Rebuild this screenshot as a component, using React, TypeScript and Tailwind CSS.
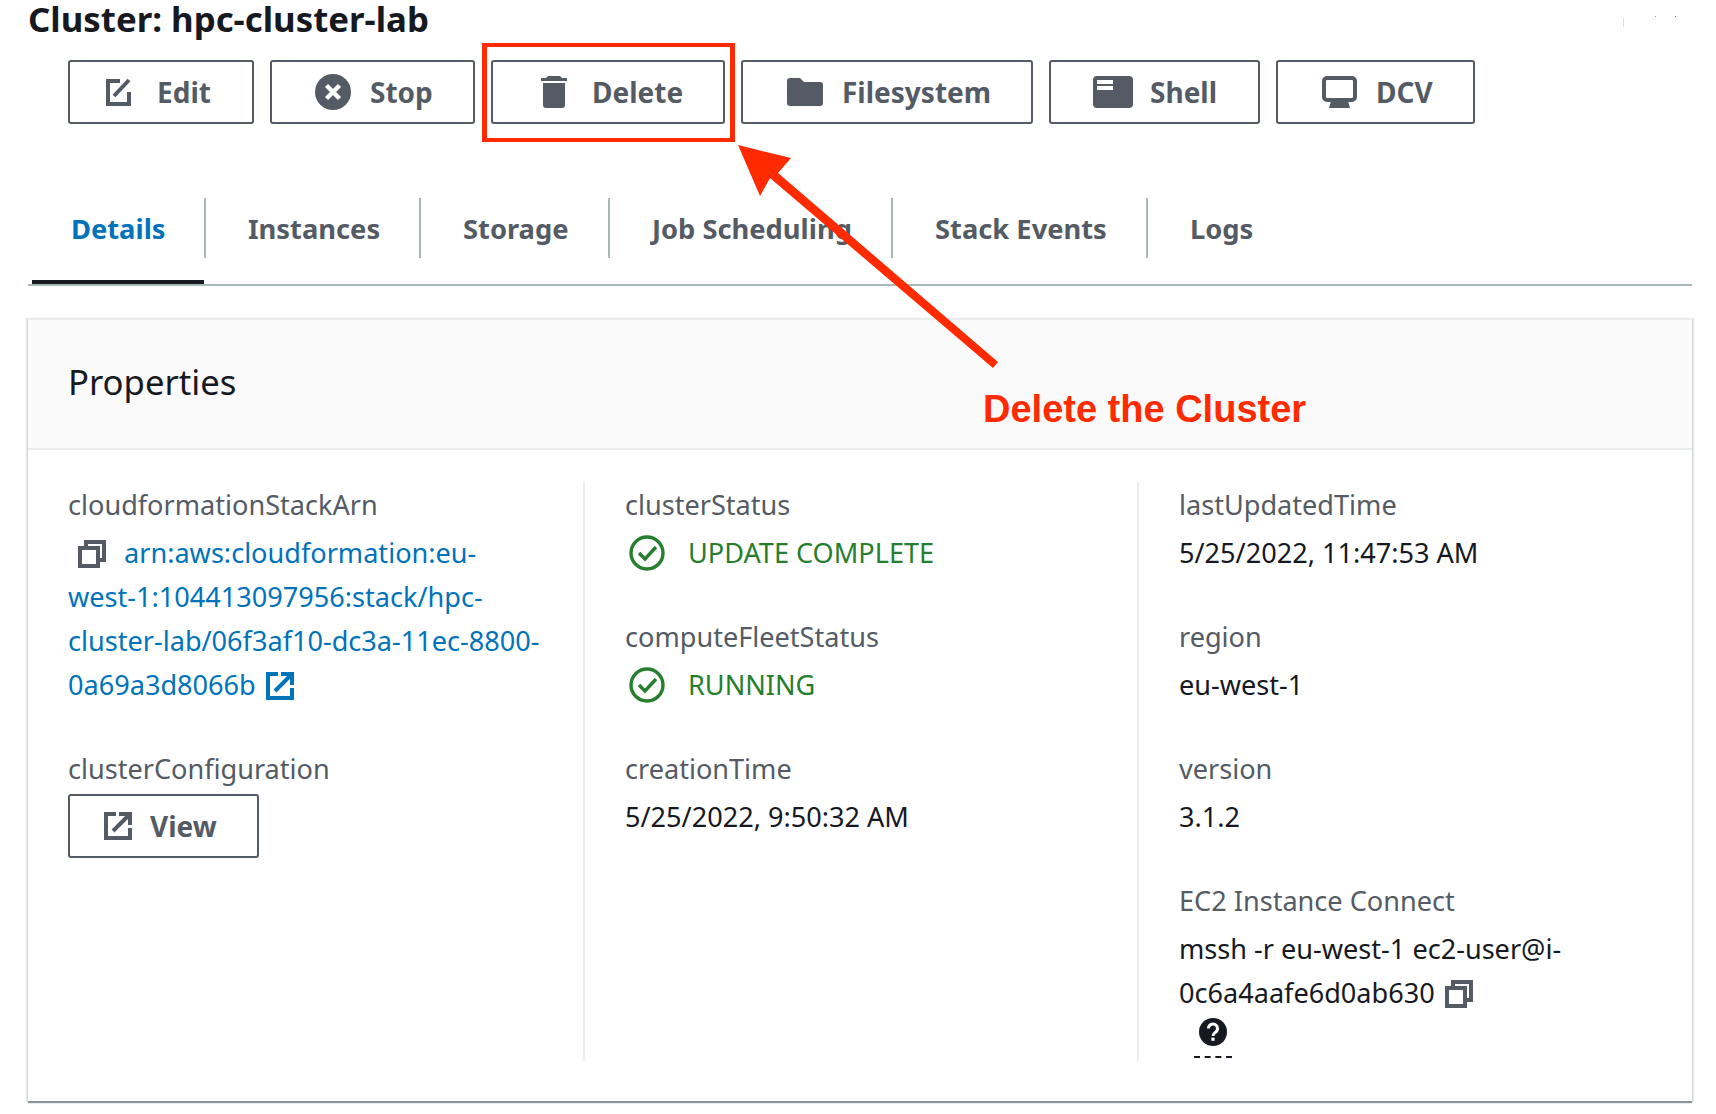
import React from 'react';

const noto = { fontFamily: '"Noto Sans", sans-serif' };

function EditIcon() {
  return (
    <svg viewBox="0 0 25 28" className="w-[25px] h-[28px]" fill="none" stroke="#545b64" strokeWidth="4">
      <path d="M14 3H2v23h21V14" />
      <path d="M8 18 23 2" />
    </svg>
  );
}

function StopIcon() {
  return (
    <svg viewBox="0 0 36 36" className="w-[36px] h-[36px]">
      <circle cx="18" cy="18" r="18" fill="#545b64" />
      <path d="M11.5 11.5l13 13M24.5 11.5l-13 13" stroke="#fff" strokeWidth="4.4" fill="none" />
    </svg>
  );
}

function TrashIcon() {
  return (
    <svg viewBox="0 0 26 32" className="w-[26px] h-[32px]" fill="#545b64">
      <path d="M7 0h12l2 2h5v3H0V2h5z" />
      <path d="M2 7h22v22a3 3 0 0 1-3 3H5a3 3 0 0 1-3-3z" />
    </svg>
  );
}

function FolderIcon() {
  return (
    <svg viewBox="0 0 36 28" className="w-[36px] h-[28px]" fill="#545b64">
      <path d="M3 0h10l4 4h16a3 3 0 0 1 3 3v18a3 3 0 0 1-3 3H3a3 3 0 0 1-3-3V3a3 3 0 0 1 3-3z" />
    </svg>
  );
}

function ShellIcon() {
  return (
    <svg viewBox="0 0 40 32" className="w-[40px] h-[32px]">
      <rect width="40" height="32" rx="4" fill="#545b64" />
      <rect x="4" y="4" width="16" height="4" fill="#fff" />
      <rect x="4" y="10" width="16" height="4" fill="#fff" />
    </svg>
  );
}

function MonitorIcon() {
  return (
    <svg viewBox="0 0 35 32" className="w-[35px] h-[32px]" fill="none">
      <rect x="2" y="2" width="31" height="22" rx="3" stroke="#545b64" strokeWidth="4" />
      <path d="M9 25h17l2 7H7z" fill="#545b64" />
    </svg>
  );
}

function CopyIcon() {
  return (
    <svg viewBox="0 0 28 28" className="w-[28px] h-[28px] shrink-0" fill="none" stroke="#545b64" strokeWidth="4">
      <rect x="2" y="8" width="18" height="18" />
      <path d="M8 7V2h18v18h-5" />
    </svg>
  );
}

function ExternalIcon({ color }: { color: string }) {
  return (
    <svg viewBox="0 0 28 28" className="w-[28px] h-[28px] shrink-0" fill="none" stroke={color} strokeWidth="4">
      <path d="M12 2H2v24h24V16" />
      <path d="M9 19 24 4M15 2h11v11" />
    </svg>
  );
}

function CheckIcon() {
  return (
    <svg viewBox="0 0 36 36" className="w-[36px] h-[36px] shrink-0" fill="none" stroke="#277e2f" strokeWidth="3.4">
      <circle cx="18" cy="18" r="16" />
      <path d="M10 18l6 6 11-12" />
    </svg>
  );
}

function HelpIcon() {
  return (
    <svg viewBox="0 0 28 28" className="w-[28px] h-[28px]">
      <circle cx="14" cy="14" r="14" fill="#16191f" />
      <path d="M9.5 10.5a4.5 4.5 0 1 1 7 3.7c-1.6 1.1-2.5 1.8-2.5 3.8" stroke="#fff" strokeWidth="3" fill="none" />
      <rect x="12.4" y="19.6" width="3.2" height="3.2" fill="#fff" />
    </svg>
  );
}

const buttons = [
  { label: 'Edit', icon: <EditIcon />, cls: 'w-[186px] pl-[36px] gap-[26px]' },
  { label: 'Stop', icon: <StopIcon />, cls: 'w-[205px] pl-[43px] gap-[19px]' },
  { label: 'Delete', icon: <TrashIcon />, cls: 'w-[234px] pl-[48px] gap-[25px]' },
  { label: 'Filesystem', icon: <FolderIcon />, cls: 'w-[292px] pl-[44px] gap-[19px]' },
  { label: 'Shell', icon: <ShellIcon />, cls: 'w-[211px] pl-[42px] gap-[17px]' },
  { label: 'DCV', icon: <MonitorIcon />, cls: 'w-[199px] pl-[44px] gap-[19px]' },
];

const tabs = [
  { label: 'Details', cls: 'w-[174px] pl-[39px]', active: true },
  { label: 'Instances', cls: 'w-[215px] pl-[42px]' },
  { label: 'Storage', cls: 'w-[189px] pl-[42px]' },
  { label: 'Job Scheduling', cls: 'w-[283px] pl-[42px]' },
  { label: 'Stack Events', cls: 'w-[255px] pl-[42px]' },
  { label: 'Logs', cls: 'w-[150px] pl-[42px]', last: true },
];

function Field({ label, children, className }: { label: string; children: React.ReactNode; className?: string }) {
  return (
    <div className={className}>
      <div className="text-[#545b64] mb-[4px]">{label}</div>
      {children}
    </div>
  );
}

function Status({ text }: { text: string }) {
  return (
    <div className="flex items-center gap-[23px] text-[#277e2f] h-[44px] pl-[4px]">
      <CheckIcon />
      <span>{text}</span>
    </div>
  );
}

export default function App() {
  return (
    <div className="relative w-[1716px] h-[1114px] bg-white overflow-hidden pl-[28px] pr-[24px] text-[27.1px] leading-[44px] text-[#16191f]" style={noto}>
      <h1 className="text-[34.8px] leading-[37px] font-bold h-[40px]">Cluster: hpc-cluster-lab</h1>

      <div className="flex gap-[16px] pl-[40px] mt-[20px] text-[28px]">
        {buttons.map(b => (
          <div
            key={b.label}
            className={`flex items-center h-[64px] border-2 border-[#545b64] rounded-[3px] font-bold text-[#545b64] ${b.cls}`}
          >
            {b.icon}
            <span>{b.label}</span>
          </div>
        ))}
      </div>

      {/* tabs */}
      <div className="flex mt-[74px] h-[88px] border-b-2 border-[#aab7b8] pl-[4px] text-[27.3px]">
        {tabs.map(t => (
          <div key={t.label} className={`relative h-[86px] ${t.cls}`}>
            <div className={`h-[60px] pt-[1px] flex items-center font-bold ${t.last ? '' : 'border-r-2 border-[#aab7b8]'} ${t.active ? 'text-[#0073bb]' : 'text-[#545b64]'}`}>
              {t.label}
            </div>
            {t.active && <div className="absolute left-0 right-[2px] bottom-0 h-[4px] bg-[#16191f]" />}
          </div>
        ))}
      </div>

      {/* properties card */}
      <div className="mt-[32px] h-[783px] border-t-2 border-[#eaeded] shadow-[0_2px_1px_0_rgba(0,28,36,0.45),2px_0_1px_0_rgba(0,28,36,0.1),-2px_0_1px_0_rgba(0,28,36,0.1)]">
        <div className="h-[130px] bg-[#fafafa] border-b-2 border-[#eaeded] flex items-center pl-[40px] pb-[4px] text-[34.7px]">
          Properties
        </div>
        <div className="grid grid-cols-[557px_554px_1fr]">
          <div className="mt-[32px] pt-[1px] pl-[40px] pr-[43px] h-[579px] border-r-2 border-[#eaeded]">
            <Field label="cloudformationStackArn" className="mb-[40px]">
              <div className="text-[#0073bb]">
                <span className="inline-block align-[-5px] ml-[10px] mr-[18px]"><CopyIcon /></span>
                arn:aws:cloudformation:eu-west-1:104413097956:stack/hpc-cluster-lab/06f3af10-dc3a-11ec-8800-0a69a3d8066b
                <span className="inline-block align-[-5px] ml-[10px]"><ExternalIcon color="#0073bb" /></span>
              </div>
            </Field>
            <Field label="clusterConfiguration">
              <div className="flex items-center w-[191px] h-[64px] -mt-[1px] pl-[34px] gap-[18px] border-2 border-[#545b64] rounded-[3px] font-bold text-[#545b64] text-[28px]">
                <ExternalIcon color="#545b64" />
                <span>View</span>
              </div>
            </Field>
          </div>
          <div className="mt-[32px] pt-[1px] pl-[40px] h-[579px] border-r-2 border-[#eaeded]">
            <Field label="clusterStatus" className="mb-[40px]"><Status text="UPDATE COMPLETE" /></Field>
            <Field label="computeFleetStatus" className="mb-[40px]"><Status text="RUNNING" /></Field>
            <Field label="creationTime"><div>5/25/2022, 9:50:32 AM</div></Field>
          </div>
          <div className="mt-[32px] pt-[1px] pl-[40px] pr-[60px]">
            <Field label="lastUpdatedTime" className="mb-[40px]"><div>5/25/2022, 11:47:53 AM</div></Field>
            <Field label="region" className="mb-[40px]"><div>eu-west-1</div></Field>
            <Field label="version" className="mb-[40px]"><div>3.1.2</div></Field>
            <Field label="EC2 Instance Connect">
              <div>
                mssh -r eu-west-1 ec2-user@i-0c6a4aafe6d0ab630
                <span className="inline-block align-[-5px] ml-[10px]"><CopyIcon /></span>
              </div>
              <div className="ml-[15px] mt-[3px] w-[38px] flex flex-col items-center">
                <HelpIcon />
                <div className="mt-[10px] w-[38px] border-b-2 border-dashed border-[#16191f]" />
              </div>
            </Field>
          </div>
        </div>
      </div>

      {/* annotation layer */}
      <div className="absolute left-[482px] top-[43px] w-[253px] h-[99px] border-x-[5px] border-y-[4px] border-[#ff2a00]" />
      <svg className="absolute left-0 top-0 pointer-events-none" width="1716" height="1114">
        <polygon fill="#ff2a00" points="738,145 791,158 778,173 998,362 993,368 770,178 760,196" />
        <rect x="1623" y="18" width="1" height="9" fill="#ddd" />
        <rect x="1655" y="16" width="1" height="1" fill="#999" />
        <rect x="1675" y="16" width="1" height="1" fill="#777" />
      </svg>
      <div className="absolute left-[983px] top-[384px] text-[#ff2a00] font-bold text-[38px] leading-[50px] whitespace-nowrap" style={{ fontFamily: '"Liberation Sans", Arial, sans-serif' }}>
        Delete the Cluster
      </div>
    </div>
  );
}
